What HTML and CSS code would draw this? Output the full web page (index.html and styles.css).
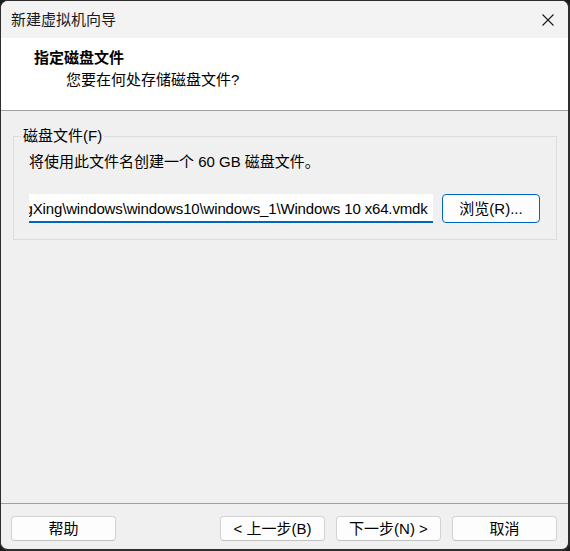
FILE: index.html
```html
<!DOCTYPE html>
<html lang="zh-CN">
<head>
<meta charset="utf-8">
<title>新建虚拟机向导</title>
<link rel="stylesheet" href="styles.css">
</head>
<body>
<div class="window">
  <div class="titlebar">
    <span class="title">新建虚拟机向导</span>
    <span class="close" aria-label="关闭">
      <svg width="12" height="12" viewBox="0 0 12 12"><path d="M0.5 0.5 L11.5 11.5 M11.5 0.5 L0.5 11.5" stroke="#1a1a1a" stroke-width="1.1" fill="none"/></svg>
    </span>
  </div>
  <div class="header">
    <div class="header-title">指定磁盘文件</div>
    <div class="header-sub">您要在何处存储磁盘文件?</div>
  </div>
  <div class="content">
    <fieldset class="group">
      <legend class="group-label">磁盘文件(F)</legend>
      <div class="desc">将使用此文件名创建一个 60 GB 磁盘文件。</div>
      <div class="row">
        <input class="input" id="path" type="text" value="D:\Virtual Machines\ZhangXing\windows\windows10\windows_1\Windows 10 x64.vmdk">
        <button class="btn btn-accent">浏览(R)...</button>
      </div>
    </fieldset>
  </div>
  <div class="footer">
    <button class="btn">帮助</button>
    <div class="spacer"></div>
    <button class="btn">&lt; 上一步(B)</button>
    <button class="btn">下一步(N) &gt;</button>
    <button class="btn">取消</button>
  </div>
</div>
<script src="script.js"></script>
</body>
</html>
```

FILE: styles.css
```css
html, body {
  margin: 0;
  padding: 0;
  background: #1c1c1c;
}
body {
  font-family: "Liberation Sans", "Noto Sans CJK SC", sans-serif;
  font-size: 15px;
  line-height: 20px;
  color: #000;
}
.window {
  width: 570px;
  height: 551px;
  box-sizing: border-box;
  border: 1px solid #2e2e2e;
  border-right-width: 2px;
  border-bottom-width: 2px;
  border-radius: 8px;
  background: #f0f0f0;
  overflow: hidden;
  display: flex;
  flex-direction: column;
}
.titlebar {
  height: 37px;
  flex: none;
  background: #f3f3f3;
  display: flex;
  align-items: center;
  justify-content: space-between;
  padding-left: 10px;
  padding-right: 14px;
}
.title {
  color: #1a1a1a;
}
.close {
  display: flex;
  width: 12px;
  height: 12px;
}
.header {
  flex: none;
  box-sizing: border-box;
  background: #fff;
  border-bottom: 1px solid #a0a0a0;
  padding: 10px 0 0 33px;
  height: 73px;
}
.header-title {
  font-weight: 700;
}
.header-sub {
  margin-top: 2px;
  margin-left: 32px;
}
.content {
  flex: 1;
  padding: 15px 11px 0 12px;
}
.group {
  margin: 0;
  border: 1px solid #dcdcdc;
  padding: 6px 16px 16px 15px;
  min-width: 0;
}
.group-label {
  padding: 0 2px;
  margin-left: -8px;
}
.desc {
  white-space: nowrap;
}
.row {
  margin-top: 22px;
  display: flex;
  gap: 9px;
  height: 29px;
}
.input {
  width: 404px;
  height: 29px;
  flex: none;
  box-sizing: border-box;
  margin: 0;
  background: #fff;
  border: none;
  border-bottom: 2px solid #0067c0;
  border-radius: 0;
  outline: none;
  padding: 2px 5px 0 0;
  font: inherit;
  letter-spacing: -0.15px;
  color: #000;
}
.btn {
  font: inherit;
  color: #000;
  width: 105px;
  height: 25px;
  box-sizing: border-box;
  background: #fdfdfd;
  border: 1px solid #d3d3d3;
  border-bottom-color: #c2c2c2;
  border-radius: 4px;
  padding: 0;
  line-height: 20px;
}
.btn-accent {
  width: 98px;
  height: 29px;
  border: 1px solid #0067c0;
}
.footer {
  flex: none;
  height: 46px;
  box-sizing: border-box;
  border-top: 1px solid #a0a0a0;
  padding: 12px 11px 0 10px;
  display: flex;
  align-items: flex-start;
  gap: 11px;
}
.spacer {
  flex: 1;
}
```

FILE: script.js
```js
var p = document.getElementById('path');
p.scrollLeft = p.scrollWidth;
```
